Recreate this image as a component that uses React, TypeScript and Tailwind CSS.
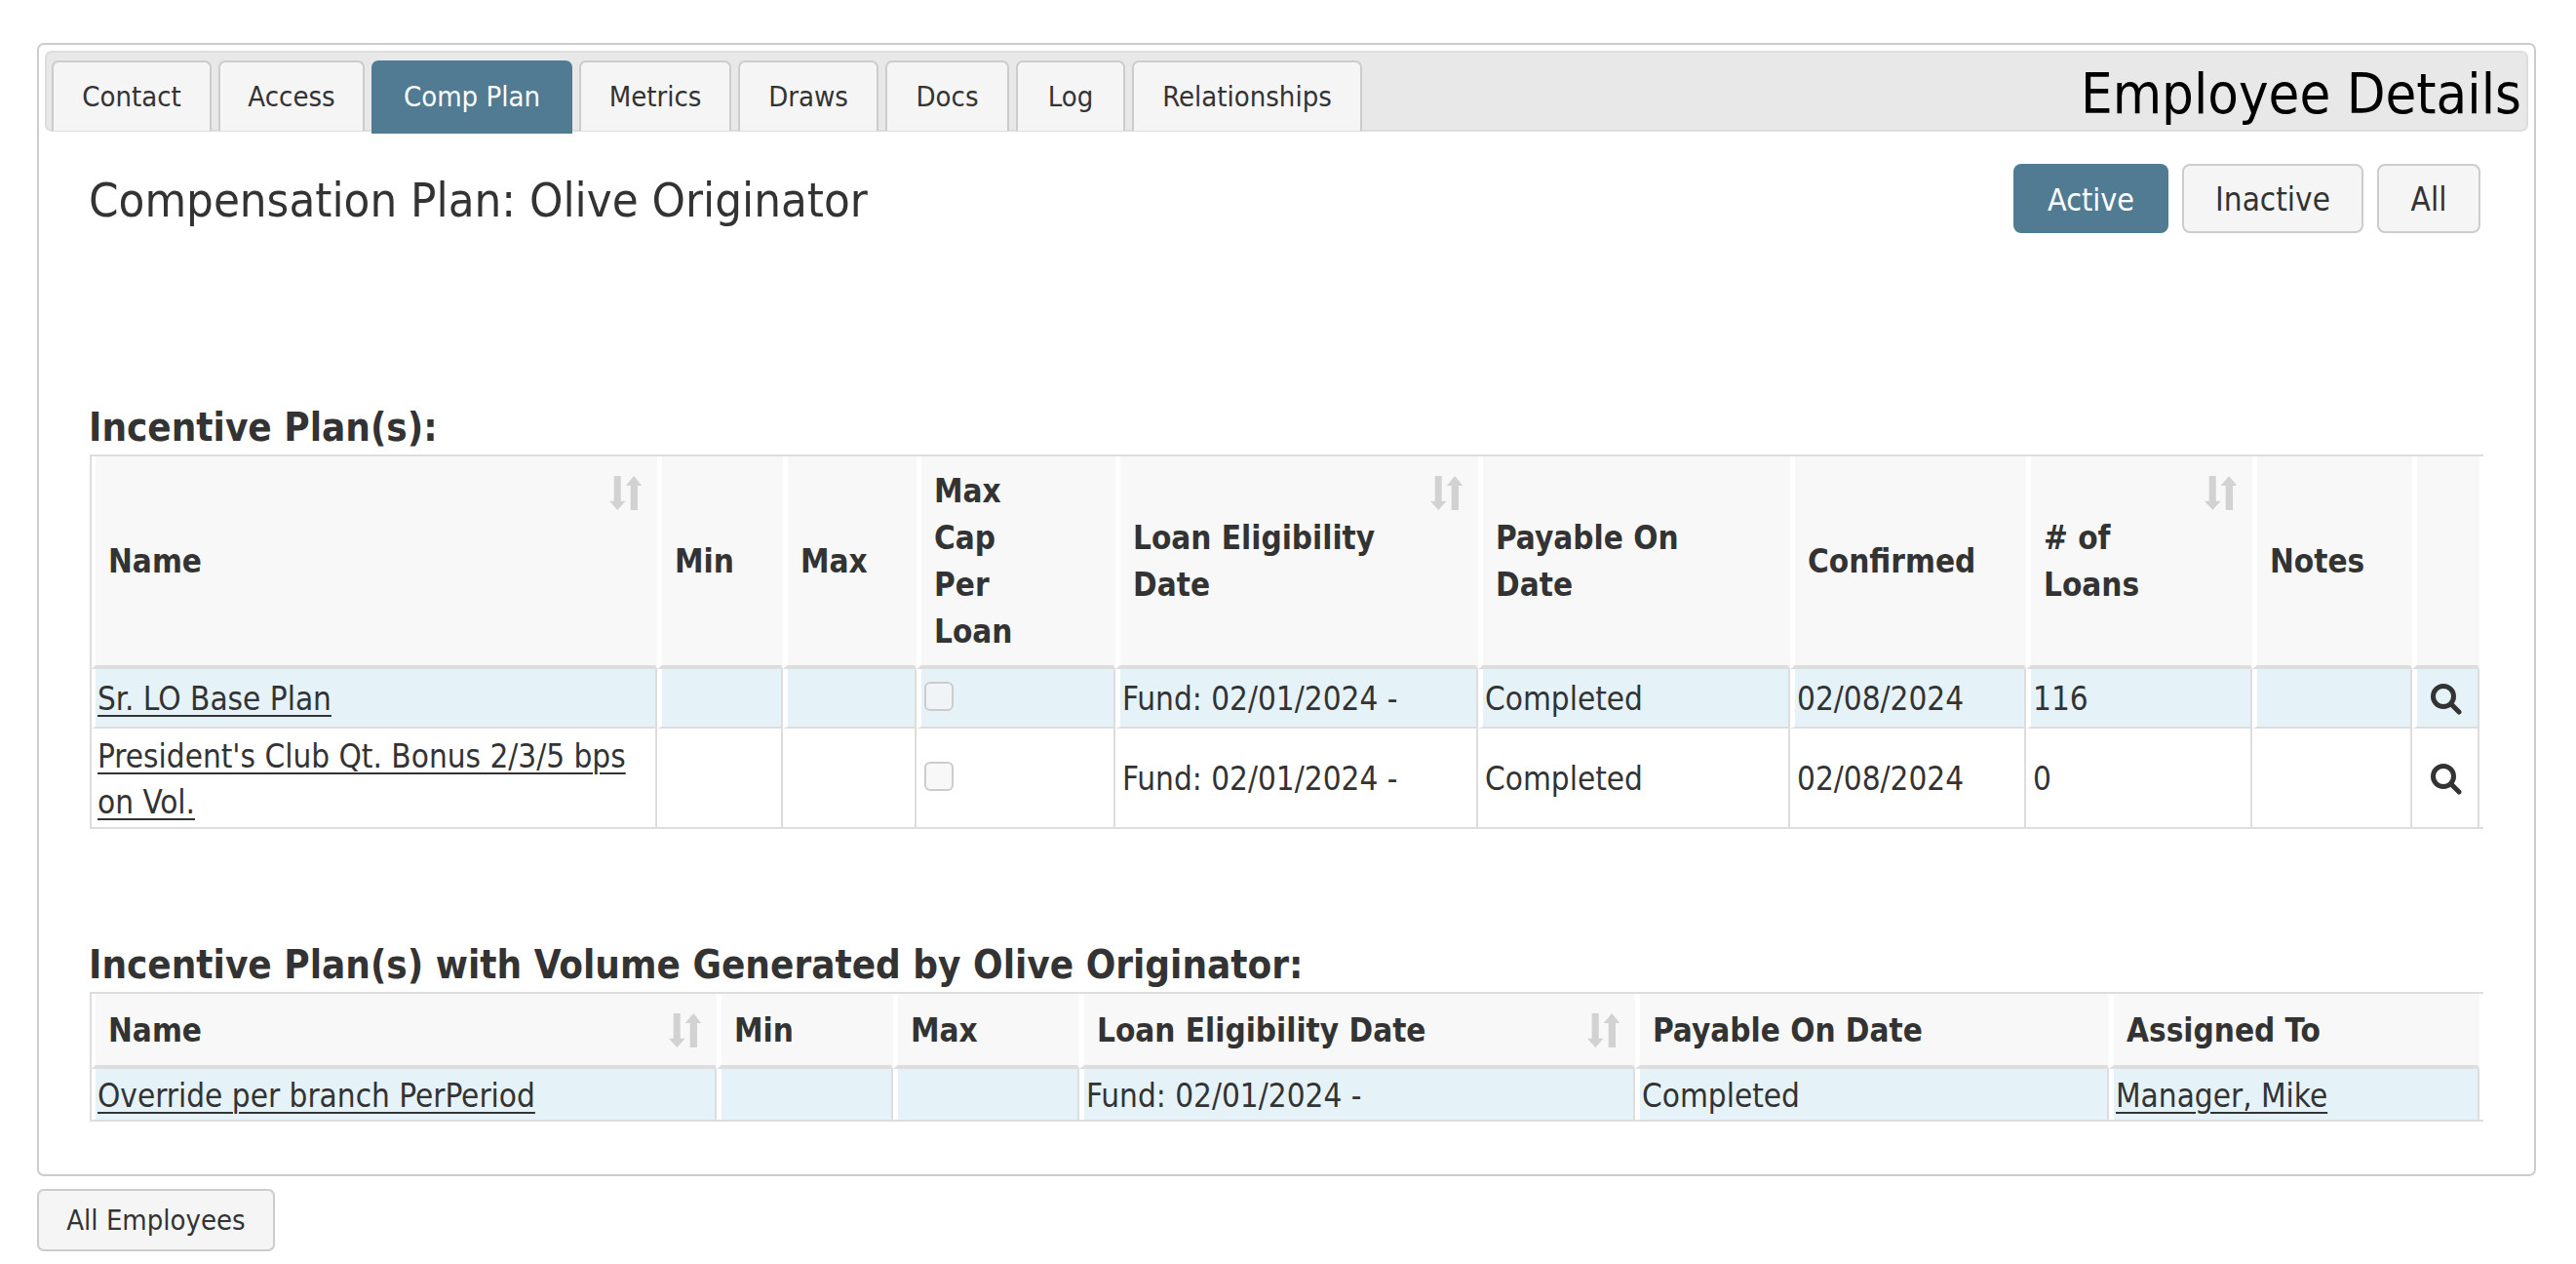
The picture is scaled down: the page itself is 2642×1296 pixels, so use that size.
import React from "react";

const tabs = [
  { label: "Contact", width: "w-[164px]" },
  { label: "Access", width: "w-[150px]" },
  { label: "Comp Plan", width: "w-[206px]", active: true },
  { label: "Metrics", width: "w-[156px]" },
  { label: "Draws", width: "w-[144px]" },
  { label: "Docs", width: "w-[127px]" },
  { label: "Log", width: "w-[112px]" },
  { label: "Relationships", width: "w-[236px]" },
];

const thClass =
  "relative bg-[#f8f8f8] border-l-[5px] first:border-l-[4px] border-l-white border-r-2 border-r-[#f8f8f8] border-b-4 border-b-[#ddd] pl-[13px] pr-2 pt-[2px] text-left align-middle font-bold leading-[48px]";
const tdClass =
  "border-l-[5px] first:border-l-[4px] border-l-white border-r-2 border-r-[#ddd] pl-[2px] pr-1 pt-[2px] align-middle leading-[47px]";
const linkClass = "underline underline-offset-[5px] decoration-2 text-[#333]";

function SortIcon() {
  return (
    <svg className="absolute top-[20px] right-[14px]" width="33" height="35" viewBox="0 0 33 35" fill="#d2d2d2">
      <path d="M4.7 0h7v25.7h5L8.3 35 0 25.7h4.7z" />
      <path d="M25.2 0l8.1 10H29v25h-7.3V10h-5z" />
    </svg>
  );
}

function SearchIcon() {
  return (
    <svg className="block ml-[12px]" width="32" height="32" viewBox="0 0 32 32" fill="none" stroke="#333">
      <circle cx="13" cy="13" r="10.5" strokeWidth="5" />
      <path d="M21 21l8 8" strokeWidth="5" strokeLinecap="round" />
    </svg>
  );
}

function Checkbox({ tinted }: { tinted?: boolean }) {
  return (
    <span
      className={
        tinted
          ? "block ml-[1px] w-[30px] h-[30px] rounded-[6px] border-[2.5px] border-[#ccc] bg-[#f1f4f6] -translate-y-[3px]"
          : "block ml-[1px] w-[30px] h-[30px] rounded-[6px] border-[2.5px] border-[#ccc] bg-[#f8f8f8] -translate-y-[3px]"
      }
    />
  );
}

export default function App() {
  return (
    <div className="w-[2642px] h-[1296px] overflow-hidden bg-white pl-[38px] pt-[44px] text-[#333] text-[33px] font-['DejaVu_Sans',sans-serif] font-stretch-condensed">
      <div className="w-[2563px] h-[1162px] border-2 border-[#ccc] rounded-[7px] p-[6px]">
        {/* tab strip */}
        <div className="h-[83px] border-2 border-[#ddd] bg-[#e8e8e8] rounded-[7px] flex items-start pt-[8px] pl-[5px] pr-[5px]">
          <div className="flex gap-[7px]">
            {tabs.map((t) => (
              <div
                key={t.label}
                className={
                  t.active
                    ? `${t.width} h-[75px] -mb-[3px] pt-[1px] pb-[1px] rounded-t-[7px] bg-[#507b92] text-white text-[29px] flex items-center justify-center`
                    : `${t.width} h-[72px] pt-[2px] rounded-t-[7px] border-2 border-b-0 border-[#ccc] bg-[#f5f5f5] text-[29px] flex items-center justify-center`
                }
              >
                {t.label}
              </div>
            ))}
          </div>
          <div className="ml-auto -mt-[3px] text-[57.5px] leading-[75px] text-black">Employee Details</div>
        </div>

        <div className="px-[46px]">
          <div className="mt-[33px] flex items-start justify-between pr-[3px]">
            <h2 className="-ml-[1px] pt-[3px] text-[48.7px] leading-[68px]">Compensation Plan: Olive Originator</h2>
            <div className="flex gap-[14px]">
              <div className="w-[159px] h-[71px] pt-[2px] rounded-[8px] bg-[#507b92] text-white text-[32px] flex items-center justify-center">Active</div>
              <div className="w-[186px] h-[71px] pt-[2px] rounded-[8px] border-2 border-[#ccc] bg-[#f5f5f5] flex items-center justify-center">Inactive</div>
              <div className="w-[106px] h-[71px] pt-[2px] rounded-[8px] border-2 border-[#ccc] bg-[#f5f5f5] flex items-center justify-center">All</div>
            </div>
          </div>

          <h3 className="mt-[175px] mb-[4px] -ml-[1px] text-[40px] leading-[48px] font-bold">Incentive Plan(s):</h3>
          <div className="border-2 border-r-0 border-[#ddd]">
            <table className="table-fixed border-separate border-spacing-0 w-[2449px]">
              <colgroup>
                <col className="w-[580px]" />
                <col className="w-[129px]" />
                <col className="w-[137px]" />
                <col className="w-[204px]" />
                <col className="w-[372px]" />
                <col className="w-[320px]" />
                <col className="w-[242px]" />
                <col className="w-[232px]" />
                <col className="w-[164px]" />
                <col className="w-[69px]" />
              </colgroup>
              <thead>
                <tr className="h-[218px]">
                  <th className={thClass}>Name<SortIcon /></th>
                  <th className={thClass}>Min</th>
                  <th className={thClass}>Max</th>
                  <th className={thClass}>Max<br />Cap<br />Per<br />Loan</th>
                  <th className={thClass}>Loan Eligibility<br />Date<SortIcon /></th>
                  <th className={thClass}>Payable On<br />Date</th>
                  <th className={thClass}>Confirmed</th>
                  <th className={thClass}># of<br />Loans<SortIcon /></th>
                  <th className={thClass}>Notes</th>
                  <th className={thClass}></th>
                </tr>
              </thead>
              <tbody>
                <tr className="h-[61px] bg-[#e5f2f8] [&>td]:border-b-2 [&>td]:border-b-[#ddd]">
                  <td className={tdClass}><a className={linkClass}>Sr. LO Base Plan</a></td>
                  <td className={tdClass}></td>
                  <td className={tdClass}></td>
                  <td className={tdClass}><Checkbox tinted /></td>
                  <td className={tdClass}>Fund: 02/01/2024 -</td>
                  <td className={tdClass}>Completed</td>
                  <td className={tdClass}>02/08/2024</td>
                  <td className={tdClass}>116</td>
                  <td className={tdClass}></td>
                  <td className={tdClass}><SearchIcon /></td>
                </tr>
                <tr className="h-[101px] bg-white">
                  <td className={tdClass}><a className={linkClass}>President's Club Qt. Bonus 2/3/5 bps<br />on Vol.</a></td>
                  <td className={tdClass}></td>
                  <td className={tdClass}></td>
                  <td className={tdClass}><Checkbox /></td>
                  <td className={tdClass}>Fund: 02/01/2024 -</td>
                  <td className={tdClass}>Completed</td>
                  <td className={tdClass}>02/08/2024</td>
                  <td className={tdClass}>0</td>
                  <td className={tdClass}></td>
                  <td className={tdClass}><SearchIcon /></td>
                </tr>
              </tbody>
            </table>
          </div>

          <h3 className="mt-[115px] mb-[4px] -ml-[1px] text-[40px] leading-[48px] font-bold">Incentive Plan(s) with Volume Generated by Olive Originator:</h3>
          <div className="border-2 border-r-0 border-[#ddd]">
            <table className="table-fixed border-separate border-spacing-0 w-[2449px]">
              <colgroup>
                <col className="w-[641px]" />
                <col className="w-[181px]" />
                <col className="w-[191px]" />
                <col className="w-[570px]" />
                <col className="w-[486px]" />
                <col className="w-[380px]" />
              </colgroup>
              <thead>
                <tr className="h-[77px]">
                  <th className={thClass}>Name<SortIcon /></th>
                  <th className={thClass}>Min</th>
                  <th className={thClass}>Max</th>
                  <th className={thClass}>Loan Eligibility Date<SortIcon /></th>
                  <th className={thClass}>Payable On Date</th>
                  <th className={thClass}>Assigned To</th>
                </tr>
              </thead>
              <tbody>
                <tr className="h-[52px] bg-[#e5f2f8]">
                  <td className={tdClass}><a className={linkClass}>Override per branch PerPeriod</a></td>
                  <td className={tdClass}></td>
                  <td className={tdClass}></td>
                  <td className={tdClass}>Fund: 02/01/2024 -</td>
                  <td className={tdClass}>Completed</td>
                  <td className={tdClass}><a className={linkClass}>Manager, Mike</a></td>
                </tr>
              </tbody>
            </table>
          </div>
        </div>
      </div>
      <div className="mt-[13px] w-[244px] h-[64px] pt-[2px] rounded-[7px] border-2 border-[#ccc] bg-[#f5f5f5] text-[29px] flex items-center justify-center">
        All Employees
      </div>
    </div>
  );
}
